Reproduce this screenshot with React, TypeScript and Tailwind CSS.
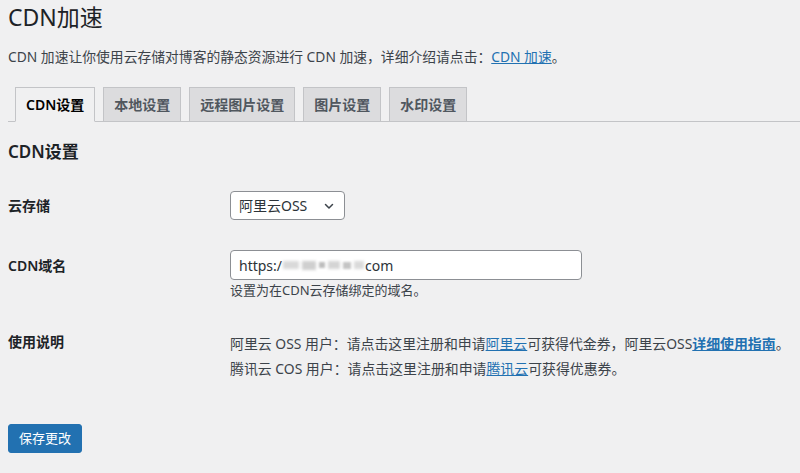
import React from "react";

const font = {
  fontFamily:
    '"Noto Sans", "Noto Sans CJK SC", sans-serif',
};

function Blur() {
  return (
    <span className="inline-flex items-center gap-[3px] align-middle mx-[1px]">
      <span className="inline-block w-[16px] h-[8px] bg-[#d9d9d9] blur-[1.5px]" />
      <span className="inline-block w-[14px] h-[9px] bg-[#cfcfcf] blur-[1.5px]" />
      <span className="inline-block w-[6px] h-[6px] bg-[#bdbdbd] blur-[1px]" />
      <span className="inline-block w-[12px] h-[8px] bg-[#d4d4d4] blur-[1.5px]" />
      <span className="inline-block w-[8px] h-[7px] bg-[#c4c4c4] blur-[1px]" />
      <span className="inline-block w-[10px] h-[8px] bg-[#dadada] blur-[1.5px]" />
    </span>
  );
}

export default function App() {
  const tabs = ["CDN设置", "本地设置", "远程图片设置", "图片设置", "水印设置"];
  return (
    <div
      className="w-[800px] h-[473px] bg-[#f0f0f1] text-[#3c434a] overflow-hidden"
      style={font}
    >
      <div className="pl-[8px]">
        <h1 className="text-[23px] leading-[29px] font-normal text-[#1d2327] pt-[3px]">
          CDN加速
        </h1>
        <p className="text-[13.8px] leading-[20px] mt-[15px]">
          CDN 加速让你使用云存储对博客的静态资源进行 CDN 加速，详细介绍请点击：
          <a className="text-[#2271b1] underline">CDN 加速</a>。
        </p>

        <div className="mt-[21px] flex items-end border-b border-[#c3c4c7] h-[34px]">
          {tabs.map((t, i) => (
            <div
              key={t}
              className={
                i === 0
                  ? "ml-[7px] h-[35px] px-[10px] flex items-center border border-[#c3c4c7] border-b-[#f0f0f1] bg-[#f0f0f1] text-[14px] font-semibold text-[#000] -mb-px"
                  : "ml-[8px] h-[34px] px-[10px] flex items-center border border-[#c3c4c7] border-b-0 bg-[#dcdcde] text-[14px] font-semibold text-[#50575e]"
              }
            >
              {t}
            </div>
          ))}
        </div>

        <h2 className="text-[17px] leading-[24px] font-semibold text-[#1d2327] mt-[18px]">
          CDN设置
        </h2>

        <div className="grid grid-cols-[222px_1fr] mt-[27px] text-[14px]">
          <div className="font-semibold text-[#1d2327] pt-[4px]">云存储</div>
          <div>
            <div className="w-[115px] h-[29px] border border-[#8c8f94] rounded-[4px] bg-white flex items-center justify-between pl-[8px] pr-[9px] text-[14px] text-[#2c3338]">
              <span>阿里云OSS</span>
              <svg width="12" height="12" viewBox="0 0 12 12" fill="none">
                <path
                  d="M2.5 4.5 L6 8 L9.5 4.5"
                  stroke="#3c434a"
                  strokeWidth="1.5"
                  strokeLinecap="round"
                  strokeLinejoin="round"
                />
              </svg>
            </div>
          </div>

          <div className="font-semibold text-[#1d2327] pt-[5px] mt-[30px]">CDN域名</div>
          <div className="mt-[30px]">
            <div className="w-[352px] h-[30px] border border-[#8c8f94] rounded-[4px] bg-white flex items-center px-[8px] text-[14px] text-[#2c3338]">
              <span>https:/</span>
              <Blur />
              <span>com</span>
            </div>
            <p className="text-[13px] leading-[20px] text-[#3c434a] mt-[0px]">
              设置为在CDN云存储绑定的域名。
            </p>
          </div>

          <div className="font-semibold text-[#1d2327] mt-[31px]">使用说明</div>
          <div className="mt-[31px] text-[13.9px] leading-[25px] text-[#3c434a]">
            <div>
              阿里云 OSS 用户：请点击这里注册和申请
              <a className="text-[#2271b1] underline">阿里云</a>
              可获得代金券，阿里云OSS
              <a className="text-[#2271b1] underline font-semibold">详细使用指南</a>。
            </div>
            <div>
              腾讯云 COS 用户：请点击这里注册和申请
              <a className="text-[#2271b1] underline">腾讯云</a>
              可获得优惠券。
            </div>
          </div>
        </div>

        <button className="mt-[43px] h-[29px] px-[10px] rounded-[3px] bg-[#2271b1] text-white text-[13px] border border-[#2271b1]">
          保存更改
        </button>
      </div>
    </div>
  );
}
